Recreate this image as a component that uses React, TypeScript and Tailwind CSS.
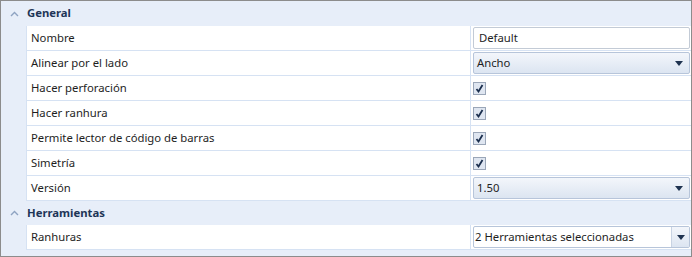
import React from "react";

const font = { fontFamily: '"Noto Sans", "Open Sans", sans-serif' };

function Chevron() {
  return (
    <svg width="9" height="6" viewBox="0 0 9 6" className="shrink-0">
      <path d="M1 5 L4.5 1.5 L8 5" fill="none" stroke="#8ea3c2" strokeWidth="1.4" />
    </svg>
  );
}

function Arrow() {
  return (
    <svg width="8" height="5" viewBox="0 0 8 5">
      <path d="M0 0 H8 L4 5 Z" fill="#1f3350" />
    </svg>
  );
}

function Check() {
  return (
    <div className="w-[13px] h-[13px] border border-[#9aa6b8] bg-[#dfe6f1] flex items-center justify-center">
      <svg width="9" height="9" viewBox="0 0 9 9">
        <path d="M1.5 5 L3.5 7.5 L7.5 1" fill="none" stroke="#1b2f4e" strokeWidth="1.8" />
      </svg>
    </div>
  );
}

function Header({ title, tall }: { title: string; tall?: boolean }) {
  return (
    <div className={(tall ? "h-[25px]" : "h-[24px]") + " flex items-center bg-[#e7eef9]"}>
      <div className="w-[25px] flex justify-center pl-[1px]">
        <Chevron />
      </div>
      <span className="text-[11.3px] font-bold text-[#1d3557] pl-[1px]">{title}</span>
    </div>
  );
}

function Row({ name, children }: { name: string; children: React.ReactNode }) {
  return (
    <div className="flex h-[25px] bg-[#e7eef9]">
      <div className="w-[25px] shrink-0" />
      <div className="flex flex-1 bg-white border-l border-b border-[#d6e2f3]">
        <div className="w-[444px] shrink-0 flex items-center pl-[4px] text-[11.3px] text-[#1e1e1e] border-r border-[#d6e2f3]">
          {name}
        </div>
        <div className="flex-1 flex items-center pl-[2px] pr-[1px]">{children}</div>
      </div>
    </div>
  );
}

function Combo({ value }: { value: string }) {
  return (
    <div className="h-[22px] w-full flex items-center justify-between rounded-[2px] border border-[#b7c5da] bg-gradient-to-b from-[#f3f6fb] to-[#dce5f1] pl-[3px] pr-[6px] text-[11.3px] text-[#1e1e1e]">
      <span>{value}</span>
      <Arrow />
    </div>
  );
}

export default function App() {
  return (
    <div className="w-[692px] h-[257px] bg-white" style={font}>
      <div className="h-full border border-[#8c8c8c] bg-[#e7eef9] flex flex-col">
        <Header title="General" tall />
        <Row name="Nombre">
          <div className="h-[22px] w-full flex items-center rounded-[2px] border border-[#c3cbd6] bg-white pl-[5px] text-[11.3px] text-[#1e1e1e]">
            Default
          </div>
        </Row>
        <Row name="Alinear por el lado">
          <Combo value="Ancho" />
        </Row>
        <Row name="Hacer perforación">
          <Check />
        </Row>
        <Row name="Hacer ranhura">
          <Check />
        </Row>
        <Row name="Permite lector de código de barras">
          <Check />
        </Row>
        <Row name="Simetría">
          <Check />
        </Row>
        <Row name="Versión">
          <Combo value="1.50" />
        </Row>
        <Header title="Herramientas" />
        <Row name="Ranhuras">
          <div className="h-[22px] w-full flex items-stretch rounded-[2px] border border-[#b7c5da] bg-white text-[11.3px] text-[#1e1e1e]">
            <span className="flex-1 flex items-center pl-[1px]">2 Herramientas seleccionadas</span>
            <div className="w-[18px] border-l border-[#c8d3e3] bg-gradient-to-b from-[#f3f6fb] to-[#dce5f1] flex items-center justify-center">
              <Arrow />
            </div>
          </div>
        </Row>
      </div>
    </div>
  );
}
